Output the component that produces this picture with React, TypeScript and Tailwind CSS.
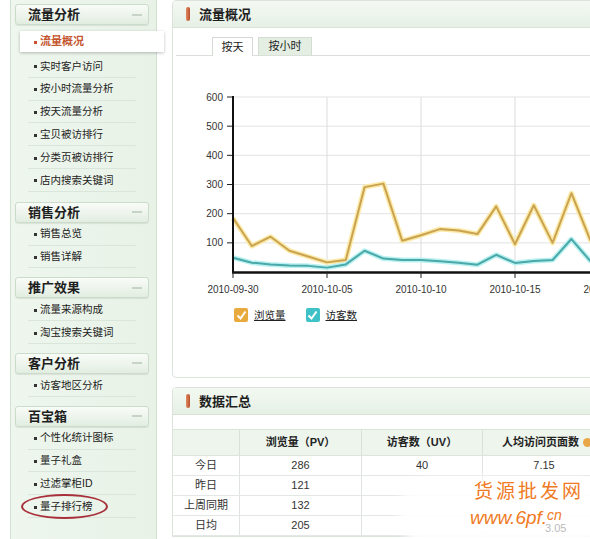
import React from 'react';

const groups = [
  { title: '销售分析', items: ['销售总览', '销售详解'] },
  { title: '推广效果', items: ['流量来源构成', '淘宝搜索关键词'] },
  { title: '客户分析', items: ['访客地区分析'] },
  { title: '百宝箱', items: ['个性化统计图标', '量子礼盒', '过滤掌柜ID', '量子排行榜'] },
];

const pv = [185, 89, 121, 73, 53, 33, 41, 291, 303, 107, 126, 147, 142, 130, 225, 95, 229, 100, 270, 110, 150];
const uv = [49, 32, 26, 22, 21, 15, 26, 73, 46, 41, 41, 37, 32, 25, 59, 31, 38, 41, 113, 38, 40];

const px = (i: number) => 233 + 18.8 * i;
const py = (v: number) => 272 - v * 0.2917;
const toPoints = (d: number[]) => d.map((v, i) => `${px(i)},${py(v)}`).join(' ');

function SideHeader({ title }: { title: string }) {
  return (
    <div className="ml-[4px] mr-[7px] h-[21px] flex items-center justify-between pl-[12px] pr-[6px] rounded-[3px] border border-[#cbdcca] bg-gradient-to-b from-[#f9fcf8] to-[#e2ede1] shadow-[0_1px_1px_rgba(0,0,0,0.08)]">
      <span className="text-[13px] font-bold text-[#1e1e1e] leading-none">{title}</span>
      <span className="w-[10px] h-[2px] bg-[#c6d4c6]" />
    </div>
  );
}

function SideItem({ label, circled }: { label: string; circled?: boolean }) {
  return (
    <div className="relative ml-[17px] w-[108px] h-[22.8px] flex items-center border-b border-[#dbe6da] pl-[6px] text-[10.5px] text-[#222] leading-none">
      <span className="w-[3px] h-[3px] bg-[#333] mr-[3px] mt-[2px] shrink-0" />
      {label}
      {circled && (
        <span className="absolute left-[-7px] top-[-1px] w-[87px] h-[25px] rounded-[50%] border-2 border-[#a8303a]" />
      )}
    </div>
  );
}

function PanelHeader({ title }: { title: string }) {
  return (
    <div className="h-[27px] flex items-center pl-[13px] bg-gradient-to-b from-[#f3f9f2] to-[#e6f0e5] border-b border-[#d6e3d5]">
      <span className="w-[4px] h-[14px] rounded-full bg-gradient-to-r from-[#e08a60] to-[#b8502c]" />
      <span className="ml-[9px] text-[13px] font-bold text-[#1e1e1e] leading-none">{title}</span>
    </div>
  );
}

function Check({ color }: { color: string }) {
  return (
    <span className={`w-[14px] h-[14px] rounded-[2px] flex items-center justify-center ${color}`}>
      <svg width="11" height="11" viewBox="0 0 11 11">
        <path d="M1.5 5.5 L4.5 8.5 L9.5 1.5" fill="none" stroke="#fff" strokeWidth="2" />
      </svg>
    </span>
  );
}

const rows = [
  ['今日', '286', '40', '7.15'],
  ['昨日', '121', '', ''],
  ['上周同期', '132', '', ''],
  ['日均', '205', '', ''],
];

export default function App() {
  return (
    <div className="relative w-[590px] h-[539px] overflow-hidden bg-white flex font-['Liberation_Sans','Noto_Sans_CJK_SC',sans-serif]">
      {/* sidebar */}
      <aside className="ml-[10px] w-[147px] shrink-0 bg-gradient-to-r from-[#eef6ed] to-[#e8f2e7] border-x border-[#d3e1d2]">
        <div className="mt-[4px]">
          <SideHeader title="流量分析" />
        </div>
        <div className="ml-[9px] mr-[-8px] mt-[6px] h-[21px] bg-white flex items-center pl-[14px] shadow-[0_1px_3px_rgba(0,0,0,0.25)] relative z-10">
          <span className="w-[3px] h-[3px] bg-[#c8542d] mr-[3px] mt-[2px]" />
          <span className="text-[11px] font-bold text-[#c4552f] leading-none">流量概况</span>
        </div>
        <div className="mt-[3px] mb-[10px]">
          {['实时客户访问', '按小时流量分析', '按天流量分析', '宝贝被访排行', '分类页被访排行', '店内搜索关键词'].map((t) => (
            <SideItem key={t} label={t} />
          ))}
        </div>
        {groups.map((g) => (
          <div key={g.title} className="mb-[9px]">
            <SideHeader title={g.title} />
            {g.items.map((t) => (
              <SideItem key={t} label={t} circled={t === '量子排行榜'} />
            ))}
          </div>
        ))}
      </aside>

      {/* main */}
      <main className="ml-[15px] w-[440px] shrink-0">
        <section className="h-[378px] border border-[#dbe3db] rounded-[4px] overflow-hidden">
          <PanelHeader title="流量概况" />
          <div className="mt-[9px] mx-[3px] pl-[36px] flex items-end gap-[5px] border-b border-[#dadfda] text-[11px] text-[#222]">
            <div className="w-[41px] h-[19px] -mb-px bg-white border border-b-0 border-[#d4d9d4] flex items-center justify-center">按天</div>
            <div className="w-[54px] h-[18px] bg-[#e4eee3] border border-b-0 border-[#d4dcd3] flex items-center justify-center">按小时</div>
          </div>
          <svg width="438" height="244" viewBox="173 56 438 244" className="block">
            {[0, 1, 2, 3, 4, 5].map((k) => (
              <g key={k}>
                <line x1="233" x2="620" y1={97 + 29.17 * k} y2={97 + 29.17 * k} stroke="#e3e3e3" strokeWidth="1" />
                <line x1="227" x2="233" y1={97 + 29.17 * k} y2={97 + 29.17 * k} stroke="#222" strokeWidth="1" />
                <text x="223" y={100.5 + 29.17 * k} textAnchor="end" fontSize="10" fill="#333">
                  {600 - 100 * k}
                </text>
              </g>
            ))}
            {[327, 421, 515].map((x) => (
              <line key={x} x1={x} x2={x} y1="97" y2="272" stroke="#dcdcdc" strokeWidth="1" />
            ))}
            <polyline points={toPoints(pv)} fill="none" stroke="#fbe9a6" strokeWidth="5" strokeLinejoin="round" />
            <polyline points={toPoints(pv)} fill="none" stroke="#c9a352" strokeWidth="2" strokeLinejoin="round" />
            <polyline points={toPoints(uv)} fill="none" stroke="#b9f1f1" strokeWidth="5" strokeLinejoin="round" />
            <polyline points={toPoints(uv)} fill="none" stroke="#4aa8a8" strokeWidth="2" strokeLinejoin="round" />
            <line x1="233" x2="233" y1="96" y2="273" stroke="#111" strokeWidth="2" />
            <line x1="232" x2="620" y1="272.5" y2="272.5" stroke="#111" strokeWidth="2.5" />
            {[
              ['2010-09-30', 233],
              ['2010-10-05', 327],
              ['2010-10-10', 421],
              ['2010-10-15', 515],
              ['2010-10-20', 609],
            ].map(([t, x]) => (
              <g key={t}>
                <line x1={x} x2={x} y1="272" y2="278" stroke="#222" strokeWidth="1" />
                <text x={x} y="293" textAnchor="middle" fontSize="10" fill="#333">
                  {t}
                </text>
              </g>
            ))}
          </svg>
          <div className="mt-[8px] pl-[61px] flex items-center text-[10.5px] text-[#222] leading-none">
            <Check color="bg-[#e8aa3c]" />
            <span className="ml-[6px] underline">浏览量</span>
            <span className="ml-[20px]">
              <Check color="bg-[#3ec2c8]" />
            </span>
            <span className="ml-[6px] underline">访客数</span>
          </div>
        </section>

        <section className="mt-[9px] border border-[#dbe3db] rounded-t-[4px] overflow-hidden">
          <PanelHeader title="数据汇总" />
          <div className="h-[14px]" />
          <div className="grid grid-cols-[67px_122px_121px_130px] h-[27px] bg-[#eef5ed] border-y border-[#dbe5da] text-[11px] font-bold text-[#222]">
            <div className="border-r border-[#d8e2d7]" />
            <div className="border-r border-[#d8e2d7] flex items-center justify-center">浏览量（PV）</div>
            <div className="border-r border-[#d8e2d7] flex items-center justify-center">访客数（UV）</div>
            <div className="flex items-center pl-[19px]">
              人均访问页面数
              <span className="ml-[4px] w-[9px] h-[9px] rounded-full bg-[#e8a84a]" />
            </div>
          </div>
          {rows.map((r) => (
            <div key={r[0]} className="grid grid-cols-[67px_122px_121px_130px] h-[20px] border-b border-[#e4e8e4] text-[11px] text-[#333]">
              <div className="border-r border-[#dfe5de] flex items-center justify-center">{r[0]}</div>
              <div className="border-r border-[#dfe5de] flex items-center justify-center">{r[1]}</div>
              <div className="border-r border-[#dfe5de] flex items-center justify-center">{r[2]}</div>
              <div className="flex items-center justify-center pr-[8px]">{r[3]}</div>
            </div>
          ))}
        </section>
      </main>

      {/* watermark */}
      <div className="absolute left-[398px] top-[478px] w-[210px] h-[72px] rounded-[36px] bg-white/90 blur-[5px]" />
      <div className="absolute left-[474px] top-[482px] whitespace-nowrap text-[19px] tracking-[3px] text-[#f07a22] leading-none">货源批发网</div>
      <div className="absolute left-[470px] top-[508px] whitespace-nowrap text-[19px] italic text-[#f07a22] leading-none">
        www.6pf.<span className="text-[14px] align-top">c</span>
        <span className="text-[14px] align-top">n</span>
      </div>
      <div className="absolute left-[545px] top-[523px] text-[11px] text-[#bbb] leading-none">3.05</div>
    </div>
  );
}
